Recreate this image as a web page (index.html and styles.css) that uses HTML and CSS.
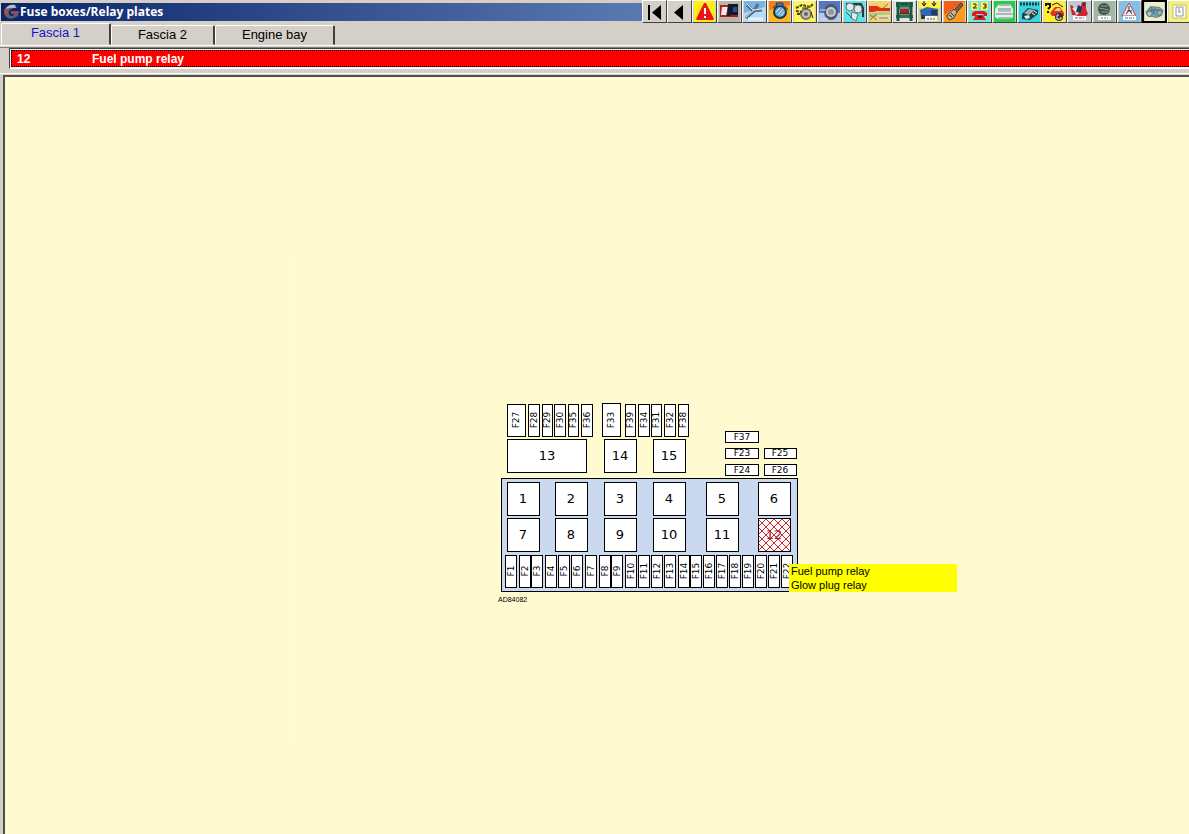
FILE: index.html
```html
<!DOCTYPE html>
<html lang="en">
<head>
  <meta charset="UTF-8">
  <meta name="viewport" content="width=device-width, initial-scale=1.0">
  <title>Fuse boxes/Relay plates</title>
  <link rel="stylesheet" href="styles.css">
</head>

<body>
  <header class="titleBar">
    <div class="caption">
      <svg class="appIcon" viewBox="0 0 16 16" aria-hidden="true">
        <path d="M12 1C6 0 1 3 1 8c0 5 5 8 10 6l4-2 1-5H8v3h3l-1 2c-3 0-5-2-4-4 1-3 4-4 8-4z" fill="#59606f"/>
        <path d="M12 1C7 0 4 2 3 5l4-1 6 0z" fill="#b9babd"/>
        <path d="M8 7h8l-2 5-4 2 1-4-3 0z" fill="#8c5152"/>
        <path d="M2 5l3 1-1 5-3-2z" fill="#bb4a3d"/>
      </svg>
      <h1>Fuse boxes/Relay plates</h1>
    </div>
    <nav class="toolbar" aria-label="Modules">
      <button aria-label="First"><svg viewBox="0 0 21 21"><path d="M4 4h2v15H4zM17 4v15L8 11.500z"/></svg></button>
      <button aria-label="Previous"><svg viewBox="0 0 21 21"><path d="M14 4v15L5 11.500z"/></svg></button>
      <button aria-label="Warnings"><svg viewBox="0 0 21 21"><path fill="#ffee16" d="M0 0h21v21H0z"/><path fill="#ee1515" d="M10 2h2l8 16-1 1H3l-1-1z"/><path fill="#fff" d="M10 7h2v6h-2zM10 15h2v2h-2z"/></svg></button>
      <button aria-label="Keys"><svg viewBox="0 0 21 21"><path fill="#b9b4ac" d="M0 0h21v21H0z"/><path fill="#b51f22" d="M1 4h11v12H1z"/><path fill="#f0eeea" d="M3 6h6l-2 8H2z"/><path fill="#15192a" d="M9 3h10v12H8z"/><path fill="#24558c" d="M14 6h4v5h-4z"/><path fill="#8f2825" d="M11 14h8v2h-8z"/></svg></button>
      <button aria-label="Service"><svg viewBox="0 0 21 21"><path fill="#b9dcf4" d="M0 0h21v21H0z"/><path fill="#78b4e2" d="M0 0h21v6L0 12z"/><path d="M3 4l6 6 9-1M2 17l8-7M14 3l-4 7" fill="none" stroke="#50728f" stroke-width="3"/><path d="M3 3l6 6 9-1M2 16l8-7" fill="none" stroke="#eef4f7"/><path d="M4 18h15" stroke="#e7f3fa" stroke-width="3"/></svg></button>
      <button aria-label="Timing"><svg viewBox="0 0 21 21"><path fill="#ffb51c" d="M0 0h21v21H0z"/><path fill="#f37e18" d="M0 0h21v4L0 9z"/><circle cx="11" cy="11" r="6" fill="#69abd6" stroke="#1d3550" stroke-width="2"/><path d="M7 2h7v3H8zM4 7l3-3M16 5l3 4" stroke="#263b55" fill="#477ca8"/><path d="M7 11l4-4M9 14l5-6M12 15l3-4" stroke="#dceaf0"/></svg></button>
      <button aria-label="Timing belts"><svg viewBox="0 0 21 21"><path fill="#fff45b" d="M0 0h21v21H0z"/><circle cx="12" cy="13" r="5" fill="#c4c2b5" stroke="#77756a" stroke-width="2"/><path d="M2 7l6-3 8 2 3-3M2 10l6 1M3 13h4" fill="none" stroke="#49471f" stroke-width="2" stroke-dasharray="3 1"/><path d="M8 7h6M17 11l2 6" fill="none" stroke="#2f2f20"/><circle cx="12" cy="13" r="2" fill="#666"/></svg></button>
      <button aria-label="Tyres"><svg viewBox="0 0 21 21"><path fill="#5475c9" d="M0 0h21v21H0z"/><path fill="#b8c8ec" d="M0 12h21v9H0z"/><ellipse cx="12" cy="11" rx="7" ry="8" fill="#4f5965"/><circle cx="12" cy="11" r="5" fill="#c6cdd2"/><circle cx="12" cy="11" r="3" fill="#8e9aa3"/><path d="M1 9h6M2 18h7" stroke="#d7def0"/></svg></button>
      <button aria-label="Drive belts"><svg viewBox="0 0 21 21"><path fill="#5de3e8" d="M0 0h21v21H0z"/><path d="M2 3h15l2 4v9" fill="none" stroke="#27373b" stroke-width="2"/><g fill="#e4eaea" stroke="#61767a"><circle cx="6" cy="6" r="4"/><circle cx="14" cy="8" r="4"/><path d="M8 11l6 2-2 7-5-3z"/></g><path d="M2 11l6 6" stroke="#455"/></svg></button>
      <button aria-label="Wheel alignment"><svg viewBox="0 0 21 21"><path fill="#f6d36a" d="M0 0h21v21H0z"/><path fill="#e3281d" d="M0 5h8l4 2h9v3H8l-4 1H0z"/><path fill="#b8c880" d="M0 12l21-2v3L0 17z"/><path fill="#e6dbac" d="M8 14h12v5H8z"/><path d="M13 8l6-5M1 19l7-6M1 14l7 5M10 17h9" stroke="#807650"/></svg></button>
      <button aria-label="Lifting points"><svg viewBox="0 0 21 21"><path fill="#e6e3dd" d="M0 0h21v21H0z"/><path fill="#237657" d="M2 1h17v5H2zM2 14h17v3H2z"/><path fill="#9c2929" d="M6 8h9v5H6z"/><path d="M4 1v19M17 1v19" stroke="#1b5b42" stroke-width="3"/><path d="M5 7h11M5 13h11M7 3h7" stroke="#182d24"/></svg></button>
      <button aria-label="Electronic parking brake"><svg viewBox="0 0 21 21"><path fill="#d6d18f" d="M0 0h21v21H0z"/><path fill="#fff044" d="M0 0h21v7H0z"/><path fill="#3268ad" d="M1 9l7-3 11 2v7l-8 4-9-3z"/><path d="M5 0v4M3 2l2 3 2-3M15 0v4M13 2l2 3 2-3" stroke="#111" fill="none"/><path fill="#253c52" d="M12 9h6v5h-6zM2 14h4v4H2z"/><path fill="#f4f4f4" d="M6 15h12v5H6z"/><path d="M8 18h8" stroke="#555" stroke-dasharray="2 1"/></svg></button>
      <button aria-label="Key programming"><svg viewBox="0 0 21 21"><path fill="#ff9b20" d="M0 0h21v21H0z"/><path fill="#ef601a" d="M0 0h21L0 14z"/><path d="M3 14l7-6 3 3-3 6-5 2-2-3z" fill="#bfb69d" stroke="#49372a"/><path d="M10 9l7-7 2 2-6 7" fill="#79614e" stroke="#49372a"/><path d="M5 14l3 2M7 12l3 3" stroke="#333"/></svg></button>
      <button aria-label="Fault codes"><svg viewBox="0 0 21 21"><path fill="#71e8d5" d="M0 0h21v21H0z"/><path fill="#fff35b" d="M2 1h7v8H2zM12 1h7v8h-7z"/><path d="M4 3h3v2L4 7h4M14 3h3v4h-3M15 5h2" fill="none" stroke="#222"/><path fill="#df1a25" d="M3 12l3-2h9l3 2v3h-3l-1-2H7v2H3zM7 14h7l3 5H4z"/><path d="M9 16h4" stroke="#7c0910" stroke-width="2"/></svg></button>
      <button aria-label="Vehicle"><svg viewBox="0 0 21 21"><path fill="#22d044" d="M0 0h21v21H0z"/><path fill="#e9eeee" d="M5 3h11l3 5v8l-3 2H4l-3-2V8z"/><path d="M4 8h13M2 13h17M5 4h11M4 17h13" stroke="#6f7f82"/><path fill="#b2bfc0" d="M4 9h13v2H4z"/></svg></button>
      <button aria-label="Engine management"><svg viewBox="0 0 21 21"><path fill="#35d6df" d="M0 0h21v21H0z"/><path d="M1 3h19" stroke="#163c40" stroke-width="3" stroke-dasharray="2 1"/><path fill="#273d43" d="M3 13l6-6 10 2v4l-8 6-8-1z"/><path fill="#8eb7bc" d="M5 12l5-4 6 1-6 5z"/><path fill="#dceeee" d="M5 15l5-1 1 3-4 1z"/><path d="M13 12l3 2M15 10l3 2" stroke="#fff"/></svg></button>
      <button aria-label="Diagnosis"><svg viewBox="0 0 21 21"><path fill="#fff02a" d="M0 0h21v21H0z"/><path d="M2 5V3h4v3L4 8M4 10v2" stroke="#111" stroke-width="2" fill="none"/><path d="M8 4l5-2 6 4" stroke="#29251c" fill="none"/><path fill="#e33422" d="M6 12l5-6h5l4 6v3H8z"/><path fill="#fac8a0" d="M10 10l3-3h3l1 3z"/><circle cx="15" cy="16" r="4" fill="#333"/><path d="M15 14h-2v4h4v-2" fill="none" stroke="#eee"/></svg></button>
      <button aria-label="Airbags"><svg viewBox="0 0 21 21"><path fill="#bfcbd0" d="M0 0h21v21H0z"/><path fill="#ce282d" d="M13 1h4v7l2 5-3 3H6l4-4zM1 4l3 1 3 9H3z"/><path d="M4 7l5 5M7 7l5 1" stroke="#eef" stroke-width="2" fill="none"/><path fill="#25345a" d="M9 4l4 2-1 6-5-1zM14 2h2v3h-2z"/><path fill="#fff" d="M4 15h13v4H4z"/><path d="M6 17h9" stroke="#a44" stroke-dasharray="3 1"/></svg></button>
      <button aria-label="Air conditioning"><svg viewBox="0 0 21 21"><path fill="#a1b8a4" d="M0 0h21v21H0z"/><circle cx="10" cy="8" r="6" fill="#405149"/><path d="M5 7l10 2M7 5h7M7 11h7" stroke="#8fa095"/><path fill="#fff" d="M4 15h13v4H4z"/><path d="M7 17h7" stroke="#687a70" stroke-dasharray="2 1"/></svg></button>
      <button aria-label="ABS"><svg viewBox="0 0 21 21"><path fill="#84bfe6" d="M0 0h21v21H0z"/><path d="M10 2l7 13H3z" fill="#f3e9e8" stroke="#b55151"/><path d="M10 5v4M7 13l3-4 3 4M8 10h5" fill="none" stroke="#35394f"/><path fill="#fff" d="M4 15h13v4H4z"/><path d="M6 17h9" stroke="#59728a" stroke-dasharray="3 1"/></svg></button>
      <button aria-label="Component locations" class="pressed"><svg viewBox="0 0 21 21"><path fill="#eeecc9" d="M0 0h21v21H0z"/><path d="M1 11l5-6 10 1 4 3-2 6-5 2-10-2z" fill="#7ba4b3" stroke="#5b8190"/><circle cx="5" cy="13" r="3" fill="#bcc7b6" stroke="#456572"/><circle cx="16" cy="12" r="3" fill="#99b1ad" stroke="#456572"/><path d="M4 9h12M7 6l4 8M12 6l-3 6" stroke="#486e7d"/></svg></button>
      <button aria-label="Fuse boxes"><svg viewBox="0 0 21 21"><path fill="#f4f080" d="M0 0h21v21H0z"/><path d="M4 4h13v13H4z" fill="#fff" stroke="#c4bd70"/><path d="M7 6h7v9H7zM10 7v4M9 11h3" stroke="#8e9294" fill="none"/></svg></button>
    </nav>
  </header>

  <nav class="tabs" role="tablist">
    <button class="tab active" role="tab" aria-selected="true">Fascia 1</button>
    <button class="tab" role="tab" aria-selected="false">Fascia 2</button>
    <button class="tab wide" role="tab" aria-selected="false">Engine bay</button>
  </nav>

  <div class="listPanel">
    <ul class="componentList">
      <li class="selected"><span class="number">12</span><span>Fuel pump relay</span></li>
    </ul>
  </div>

  <main class="canvas">
    <div class="drawing">
      <svg id="fuseBox" viewBox="295 261 604 480" width="604" height="480">
        <defs>
          <pattern id="hatch" x="758" y="519" width="8" height="8" patternUnits="userSpaceOnUse">
            <path d="M0 0l8 8M8 0l-8 8" class="hatchLine"/>
          </pattern>
        </defs>
        <rect class="plate" x="501.5" y="478.5" width="296" height="113"/>
        <text class="drawingNo" x="498" y="602">AD84082</text>
      </svg>
      <div class="tooltip">Fuel pump relay<br>Glow plug relay</div>
    </div>
  </main>

  <script src="script.js"></script>
</body>
</html>
```
FILE: styles.css
```css
* {
  box-sizing: border-box;
}

body {
  margin: 0;
  min-height: 100vh;
  display: flex;
  flex-direction: column;
  overflow: hidden;
  background-color: #d4d0c8;
  font-family: "Liberation Sans", Arial, sans-serif;
}

button {
  font-family: inherit;
  padding: 0;
}

/* title bar */
.titleBar {
  display: flex;
  height: 23px;
  padding-left: 1px;
}

.caption {
  flex: 1;
  min-width: 0;
  height: 18px;
  margin-top: 3px;
  display: flex;
  align-items: center;
  gap: 1px;
  padding-left: 2px;
  background: linear-gradient(to right, #0a246a, #5b79b1);
}

.caption h1 {
  margin: 0;
  color: #fff;
  font: bold 12px "Open Sans", Tahoma, sans-serif;
  line-height: 18px;
  white-space: nowrap;
}

.appIcon {
  width: 16px;
  height: 16px;
}

.toolbar {
  display: flex;
  flex-shrink: 0;
  margin-right: -3px;
}

.toolbar button {
  width: 25px;
  height: 23px;
  border: 1px solid;
  border-color: #fff #404040 #404040 #fff;
  background-color: #d4d0c8;
}

.toolbar .pressed {
  border: 2px solid #000;
}

.toolbar svg {
  display: block;
  width: 21px;
  height: 21px;
  margin: 0 auto;
}

.toolbar .pressed svg {
  height: 19px;
}

/* tabs */
.tabs {
  display: flex;
  align-items: flex-end;
  height: 23px;
  padding-left: 1px;
  border-bottom: 1px solid #fff;
}

.tab {
  width: 104px;
  height: 20px;
  padding-bottom: 2px;
  border: 1px solid;
  border-color: #fff #404040 transparent #fff;
  border-right-width: 2px;
  border-radius: 2px 2px 0 0;
  background-color: #d4d0c8;
  color: #000;
  font-size: 13px;
}

.tab.active {
  width: 110px;
  height: 22px;
  padding-bottom: 4px;
  color: #1a10d0;
}

.tab.wide {
  width: 120px;
}

/* component list */
.listPanel {
  margin-top: 1px;
  height: 27px;
  padding-left: 9px;
  border-top: 1px solid #808080;
  border-bottom: 1px solid #fff;
}

.componentList {
  list-style: none;
  margin: 0;
  padding: 1px 0 1px 1px;
  border-top: 1px solid #404040;
  border-left: 1px solid #404040;
  border-bottom: 1px solid #fff;
  background-color: #e0ffff;
}

.componentList li {
  display: flex;
  height: 17px;
  align-items: center;
  padding-left: 5px;
  border: 1px dotted #000;
  border-right: none;
  background-color: #f00;
  color: #fff;
  font-size: 12px;
  font-weight: bold;
}

.number {
  width: 75px;
}

/* drawing */
.canvas {
  flex: 1;
  margin: 1px 0 0 3px;
  padding-top: 184px;
  border-top: 2px solid #505050;
  border-left: 2px solid #505050;
  background-color: #fffad0;
  display: flex;
  justify-content: center;
  align-items: flex-start;
}

.drawing {
  position: relative;
  box-shadow: inset 1px 0 #fffce2;
}

#fuseBox {
  display: block;
}

.plate {
  fill: #cad8f0;
  stroke: #000;
  shape-rendering: crispEdges;
}

.slot {
  fill: #fff;
  stroke: #000;
  shape-rendering: crispEdges;
}

.slot.marked {
  fill: url(#hatch);
}

.hatchLine {
  stroke: #d2232a;
  stroke-width: 1;
}

#fuseBox text {
  text-anchor: middle;
}

.relayText {
  font: 13px "DejaVu Sans", Verdana, sans-serif;
}

.relayText.marked {
  fill: #9c2028;
}

.fuseText {
  font: 9px "DejaVu Sans", Verdana, sans-serif;
}

#fuseBox .drawingNo {
  font: 7px "Liberation Sans", Arial, sans-serif;
  text-anchor: start;
}

.tooltip {
  position: absolute;
  left: 494px;
  top: 303px;
  width: 168px;
  padding-left: 2px;
  background-color: #ff0;
  color: #000;
  font-size: 11px;
  line-height: 14px;
}
```
FILE: script.js
```js
const svgNs = "http://www.w3.org/2000/svg"
const fuseBox = document.querySelector("#fuseBox")

// name, x, y, width, height
const relays = [
  ["13", 507, 439, 79, 33], ["14", 604, 439, 32, 33], ["15", 653, 439, 32, 33],
  ["1", 507, 482, 32, 33], ["2", 555, 482, 32, 33], ["3", 604, 482, 32, 33],
  ["4", 653, 482, 32, 33], ["5", 706, 482, 32, 33], ["6", 758, 482, 32, 33],
  ["7", 507, 518, 32, 33], ["8", 555, 518, 32, 33], ["9", 604, 518, 32, 33],
  ["10", 653, 518, 32, 33], ["11", 706, 518, 32, 33], ["12", 758, 518, 32, 33]
]
const topFuses = [
  ["F27", 507, 404, 18, 32], ["F28", 528, 404, 11, 32], ["F29", 542, 404, 10, 32],
  ["F30", 554, 404, 11, 32], ["F35", 568, 404, 10, 32], ["F36", 581, 404, 11, 32],
  ["F33", 602, 403, 18, 33], ["F39", 625, 404, 10, 32], ["F34", 638, 404, 11, 32],
  ["F31", 651, 404, 10, 32], ["F32", 664, 404, 11, 32], ["F38", 678, 404, 10, 32]
]
const sideFuses = [
  ["F37", 725, 431, 33, 11], ["F23", 725, 448, 33, 10], ["F24", 725, 464, 33, 11],
  ["F25", 764, 448, 32, 10], ["F26", 764, 464, 32, 11]
]
const bottomFusesX = [505, 519, 531, 545, 558, 571, 585, 599, 611, 625, 638,
  651, 664, 678, 690, 703, 716, 729, 742, 755, 768, 781]
const marked = "12"

function addSlot(slot, textClass, baseline, rotated) {
  const [name, x, y, width, height] = slot
  const rect = document.createElementNS(svgNs, "rect")
  rect.setAttribute("x", x + 0.5)
  rect.setAttribute("y", y + 0.5)
  rect.setAttribute("width", width)
  rect.setAttribute("height", height)
  rect.classList.add("slot")

  const text = document.createElementNS(svgNs, "text")
  const cx = Math.round(x + width / 2)
  const cy = Math.round(y + height / 2)
  text.classList.add(textClass)
  text.textContent = name
  if (rotated) {
    text.setAttribute("transform", `translate(${cx + baseline} ${cy}) rotate(-90)`)
  } else {
    text.setAttribute("x", cx)
    text.setAttribute("y", cy + baseline)
  }

  if (name === marked) {
    // white backing so the hatch does not show the plate colour
    const backing = rect.cloneNode()
    fuseBox.appendChild(backing)
    rect.classList.add("marked")
    text.classList.add("marked")
  }
  fuseBox.appendChild(rect)
  fuseBox.appendChild(text)
}

relays.forEach(relay => addSlot(relay, "relayText", 4, false))
topFuses.forEach(fuse => addSlot(fuse, "fuseText", 3, true))
sideFuses.forEach(fuse => addSlot(fuse, "fuseText", 3, false))
bottomFusesX.forEach((x, i) => addSlot([`F${i + 1}`, x, 555, 11, 32], "fuseText", 3, true))
```
